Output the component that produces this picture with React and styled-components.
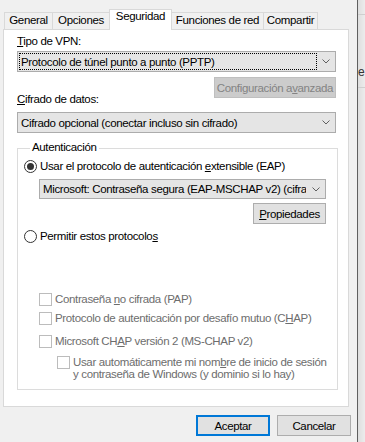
import React from 'react'
import styled, { createGlobalStyle, css } from 'styled-components'

const GlobalStyle = createGlobalStyle`
  html, body {
    margin: 0;
    background: #f0f0f0;
  }
  body {
    font-family: 'Liberation Sans', Arial, sans-serif;
    font-size: 11.5px;
    letter-spacing: -0.35px;
    color: #000;
  }
`

const Page = styled.div`
  display: flex;
  width: 365px;
  height: 442px;
  overflow: hidden;
`

const Dialog = styled.div`
  width: 357px;
  height: 442px;
  box-sizing: border-box;
  padding: 9px 8px 0 3px;
  display: flex;
  flex-direction: column;
  background: #f0f0f0;
`

// backdrop window peeking out on the right
const Side = styled.div`
  width: 8px;
  flex: none;
  box-sizing: border-box;
  border-left: 1px solid #5f5f5f;
  background: linear-gradient(to right, #dedede, #ececec);
  overflow: hidden;
  display: flex;
  flex-direction: column;
`
const SideLine = styled.div`
  height: 1px;
  margin-top: ${({ top }) => top}px;
  background: #cfcfcf;
`
const SideText = styled.div`
  margin-top: 50px;
  line-height: 15px;
  color: #333;
  font-size: 12px;
`

const TabStrip = styled.div`
  display: flex;
  align-items: flex-end;
  height: 20px;
  margin-left: 1px;
`
const Tab = styled.div`
  width: ${({ w }) => w}px;
  box-sizing: border-box;
  height: 17px;
  margin-left: -1px;
  border: 1px solid #d9d9d9;
  border-bottom: none;
  background: #f0f0f0;
  text-align: center;
  line-height: 15px;
  white-space: nowrap;
  &:first-child {
    margin-left: 0;
  }
  ${({ active }) =>
    active &&
    css`
      position: relative;
      z-index: 1;
      height: 21px;
      margin-bottom: -1px;
      background: #fff;
      line-height: 13px;
    `}
`

const Panel = styled.div`
  width: 346px;
  height: 378px;
  box-sizing: border-box;
  border: 1px solid #d9d9d9;
  background: #fff;
  padding: 0 12px 0 13px;
  display: flex;
  flex-direction: column;
`

const Label = styled.div`
  line-height: 15px;
  margin-top: ${({ mt }) => mt || 0}px;
  white-space: nowrap;
`

const Combo = styled.div`
  display: flex;
  align-items: stretch;
  height: ${({ h }) => h || 21}px;
  box-sizing: border-box;
  margin-top: ${({ mt }) => mt || 0}px;
  margin-left: ${({ ml }) => ml || 0}px;
  padding: 1px 0 1px 1px;
  border: 1px solid #acacac;
  background: #e5e5e5;
`
const ComboField = styled.div`
  flex: 1;
  min-width: 0;
  display: flex;
  align-items: center;
  padding-left: 1px;
  border: 1px dotted ${({ focused }) => (focused ? '#000' : 'transparent')};
  white-space: nowrap;
  overflow: hidden;
`
const ComboArrow = styled.div`
  width: 18px;
  flex: none;
  display: flex;
  align-items: center;
  justify-content: center;
`

const ButtonRow = styled.div`
  display: flex;
  justify-content: flex-end;
  gap: ${({ gap }) => gap || 0}px;
  margin-top: ${({ mt }) => mt || 0}px;
  margin-right: ${({ mr }) => mr || 0}px;
`
const Button = styled.div`
  width: ${({ w }) => w}px;
  height: 21px;
  box-sizing: border-box;
  border: 1px solid #adadad;
  background: #e1e1e1;
  display: flex;
  align-items: center;
  justify-content: center;
  white-space: nowrap;
  ${({ disabled }) =>
    disabled &&
    css`
      border-color: #bfbfbf;
      background: #cccccc;
      color: #838383;
    `}
  ${({ primary }) =>
    primary &&
    css`
      border: 2px solid #0078d7;
    `}
`

const Group = styled.div`
  margin-top: 15px;
  margin-right: -2px;
  border: 1px solid #dcdcdc;
  padding: 0 11px 9px 6px;
  display: flex;
  flex-direction: column;
`
const Legend = styled.div`
  width: fit-content;
  margin: -9px 0 0 6px;
  padding: 0 2px;
  background: #fff;
  line-height: 15px;
`

const OptionRow = styled.div`
  display: flex;
  align-items: ${({ multi }) => (multi ? 'flex-start' : 'center')};
  gap: 3px;
  margin-top: ${({ mt }) => mt || 0}px;
  margin-left: ${({ ml }) => ml || 0}px;
  line-height: ${({ multi }) => (multi ? 12 : 15)}px;
  white-space: nowrap;
  color: ${({ disabled }) => (disabled ? '#6d6d6d' : '#000')};
`
const Radio = styled.span`
  width: 13px;
  height: 13px;
  flex: none;
  box-sizing: border-box;
  border: 1px solid #333;
  border-radius: 50%;
  background: #fff;
  display: flex;
  align-items: center;
  justify-content: center;
  &::after {
    content: '';
    width: 7px;
    height: 7px;
    border-radius: 50%;
    background: ${({ checked }) => (checked ? '#333' : 'transparent')};
  }
`
const Check = styled.span`
  width: 13px;
  height: 13px;
  flex: none;
  box-sizing: border-box;
  border: 1px solid #bcbcbc;
  background: #fff;
`

const Chevron = () => (
  <svg width="8" height="5" viewBox="0 0 8 5">
    <polyline points="0.5,0.5 4,4 7.5,0.5" fill="none" stroke="#606060" strokeWidth="1" />
  </svg>
)

const ComboBox = ({ children, focused, ...rest }) => (
  <Combo {...rest}>
    <ComboField focused={focused}>{children}</ComboField>
    <ComboArrow>
      <Chevron />
    </ComboArrow>
  </Combo>
)

const tabs = [
  ['General', 49],
  ['Opciones', 58],
  ['Seguridad', 63, true],
  ['Funciones de red', 93],
  ['Compartir', 55],
]

export default function App() {
  return (
    <Page>
      <GlobalStyle />
      <Dialog>
        <TabStrip>
          {tabs.map(([name, w, active]) => (
            <Tab key={name} w={w} active={active}>
              {name}
            </Tab>
          ))}
        </TabStrip>
        <Panel>
          <Label mt={4}>
            <u>T</u>ipo de VPN:
          </Label>
          <ComboBox mt={2} focused>
            Protocolo de túnel punto a punto (PPTP)
          </ComboBox>
          <ButtonRow mt={5}>
            <Button w={122} disabled>
              Configuración a<u>v</u>anzada
            </Button>
          </ButtonRow>
          <Label mt={-6}>
            <u>C</u>ifrado de datos:
          </Label>
          <ComboBox mt={5}>Cifrado opcional (conectar incluso sin cifrado)</ComboBox>

          <Group>
            <Legend>Autenticación</Legend>
            <OptionRow mt={4}>
              <Radio checked />
              <span>
                Usar el protocolo de autenticación <u>e</u>xtensible (EAP)
              </span>
            </OptionRow>
            <ComboBox mt={5} ml={15} h={20}>
              Microsoft: Contraseña segura (EAP-MSCHAP v2) (cifrad
            </ComboBox>
            <ButtonRow mt={4}>
              <Button w={73}>
                <u>P</u>ropiedades
              </Button>
            </ButtonRow>
            <OptionRow mt={5}>
              <Radio />
              <span>
                Permitir estos protocolo<u>s</u>
              </span>
            </OptionRow>

            <OptionRow mt={48} ml={15} disabled>
              <Check />
              <span>
                Contraseña <u>n</u>o cifrada (PAP)
              </span>
            </OptionRow>
            <OptionRow mt={4} ml={15} disabled>
              <Check />
              <span>
                Protocolo de autenticación por desafío mutuo (C<u>H</u>AP)
              </span>
            </OptionRow>
            <OptionRow mt={8} ml={15} disabled>
              <Check />
              <span>
                Microsoft CH<u>A</u>P versión 2 (MS-CHAP v2)
              </span>
            </OptionRow>
            <OptionRow mt={7} ml={33} disabled multi>
              <Check />
              <span>
                Usar automáticamente mi nom<u>b</u>re de inicio de sesión
                <br />y contraseña de Windows (y dominio si lo hay)
              </span>
            </OptionRow>
          </Group>
        </Panel>
        <ButtonRow mt={8} mr={-2} gap={7}>
          <Button w={74} primary>
            Aceptar
          </Button>
          <Button w={74}>Cancelar</Button>
        </ButtonRow>
      </Dialog>
      <Side>
        <SideLine top={14} />
        <SideText>e</SideText>
        <SideLine top={7} />
      </Side>
    </Page>
  )
}
